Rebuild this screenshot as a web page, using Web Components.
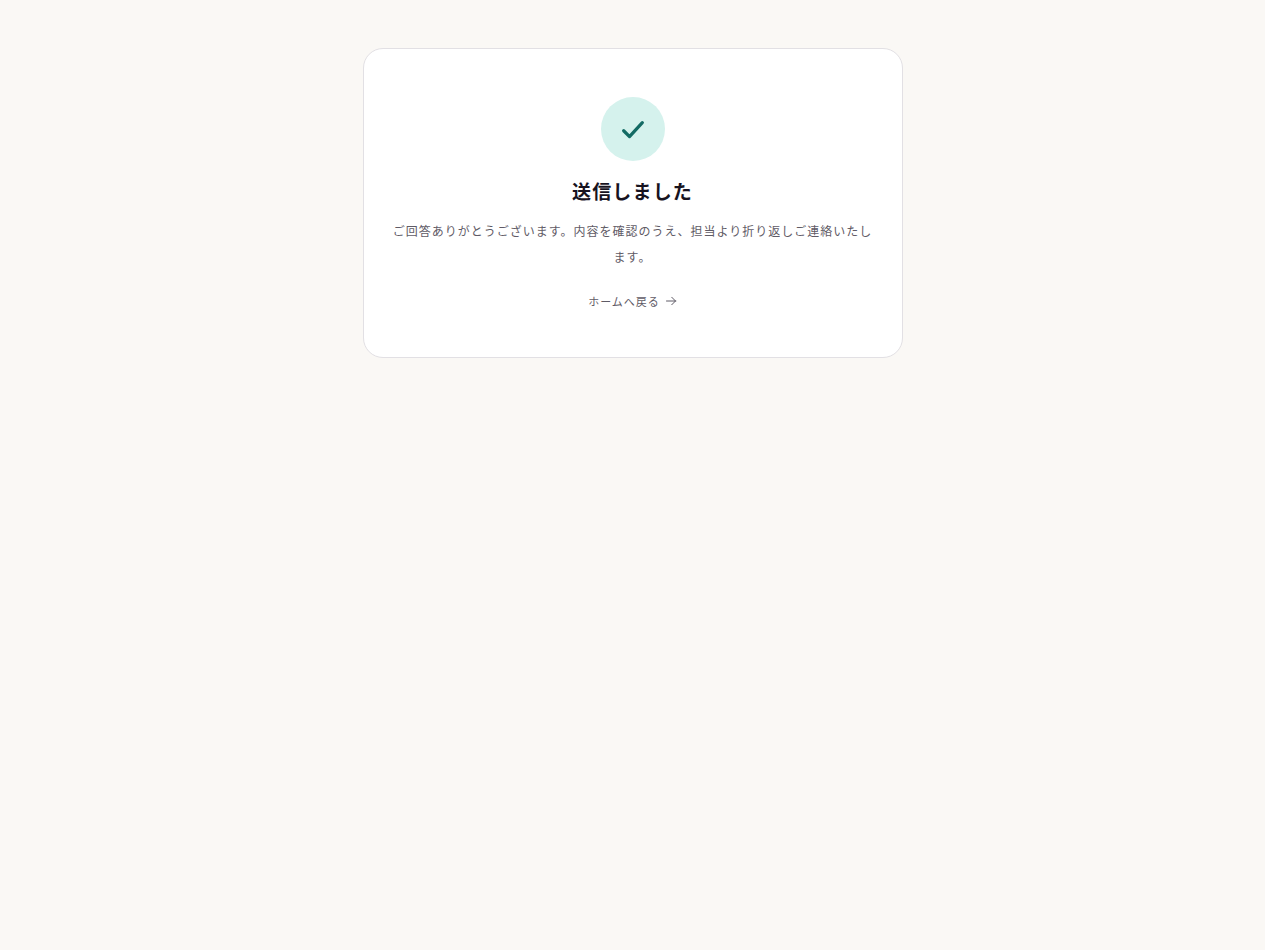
<!DOCTYPE html>
<html lang="ja">
<head>
<meta charset="utf-8">
<title>送信しました</title>
<style>
  html, body { margin: 0; background: #faf8f5; }
  body { font-family: "Noto Sans CJK JP", "Noto Sans", sans-serif; }
</style>
</head>
<body>
<thanks-page>
  <done-card heading="送信しました">
    ご回答ありがとうございます。内容を確認のうえ、担当より折り返しご連絡いたします。
    <back-link slot="action" href="#">ホームへ戻る</back-link>
  </done-card>
</thanks-page>

<script>
class ThanksPage extends HTMLElement {
  connectedCallback() {
    this.attachShadow({ mode: 'open' });
    this.shadowRoot.innerHTML = `
      <style>
        :host {
          display: flex;
          justify-content: center;
          min-height: 950px;
          padding-top: 48px;
          box-sizing: border-box;
        }
      </style>
      <slot></slot>
    `;
  }
}

class DoneCard extends HTMLElement {
  connectedCallback() {
    this.attachShadow({ mode: 'open' });
    this.shadowRoot.innerHTML = `
      <style>
        :host {
          display: block;
          width: 540px;
          height: 310px;
          box-sizing: border-box;
          padding: 48px 28px;
          background: #fff;
          border: 1px solid #e2e0e4;
          border-radius: 20px;
          text-align: center;
        }
        .icon {
          width: 64px;
          height: 64px;
          margin: 0 auto 15px;
          border-radius: 50%;
          background: #d5f2ed;
          display: flex;
          align-items: center;
          justify-content: center;
          color: #136b64;
        }
        h1 {
          margin: 0 0 12px;
          font-size: 19px;
          letter-spacing: 1.15px;
          line-height: 30px;
          font-weight: 700;
          color: #17131f;
        }
        p {
          margin: 0 0 17px;
          font-size: 12px;
          letter-spacing: 1px;
          line-height: 26px;
          color: #5f5b66;
        }
      </style>
      <div class="icon">
        <svg width="28" height="28" viewBox="0 0 24 24" fill="none" stroke="currentColor" stroke-width="2.75" stroke-linecap="round" stroke-linejoin="round">
          <path d="M4 13.5l5 5L20 6.5"/>
        </svg>
      </div>
      <h1>${this.getAttribute('heading')}</h1>
      <p><slot></slot></p>
      <slot name="action"></slot>
    `;
  }
}

class BackLink extends HTMLElement {
  connectedCallback() {
    this.attachShadow({ mode: 'open' });
    this.shadowRoot.innerHTML = `
      <style>
        :host {
          display: inline-block;
        }
        a {
          display: inline-flex;
          align-items: center;
          gap: 5px;
          font-size: 11px;
          letter-spacing: 1px;
          line-height: 18px;
          color: #5f5b66;
          text-decoration: none;
        }
      </style>
      <a href="${this.getAttribute('href')}">
        <slot></slot>
        <svg width="12" height="12" viewBox="0 0 24 24" fill="none" stroke="currentColor" stroke-width="2" stroke-linecap="round" stroke-linejoin="round">
          <path d="M13.5 4.5L21 12m0 0l-7.5 7.5M21 12H3"/>
        </svg>
      </a>
    `;
  }
}

customElements.define('thanks-page', ThanksPage);
customElements.define('done-card', DoneCard);
customElements.define('back-link', BackLink);
</script>
</body>
</html>
